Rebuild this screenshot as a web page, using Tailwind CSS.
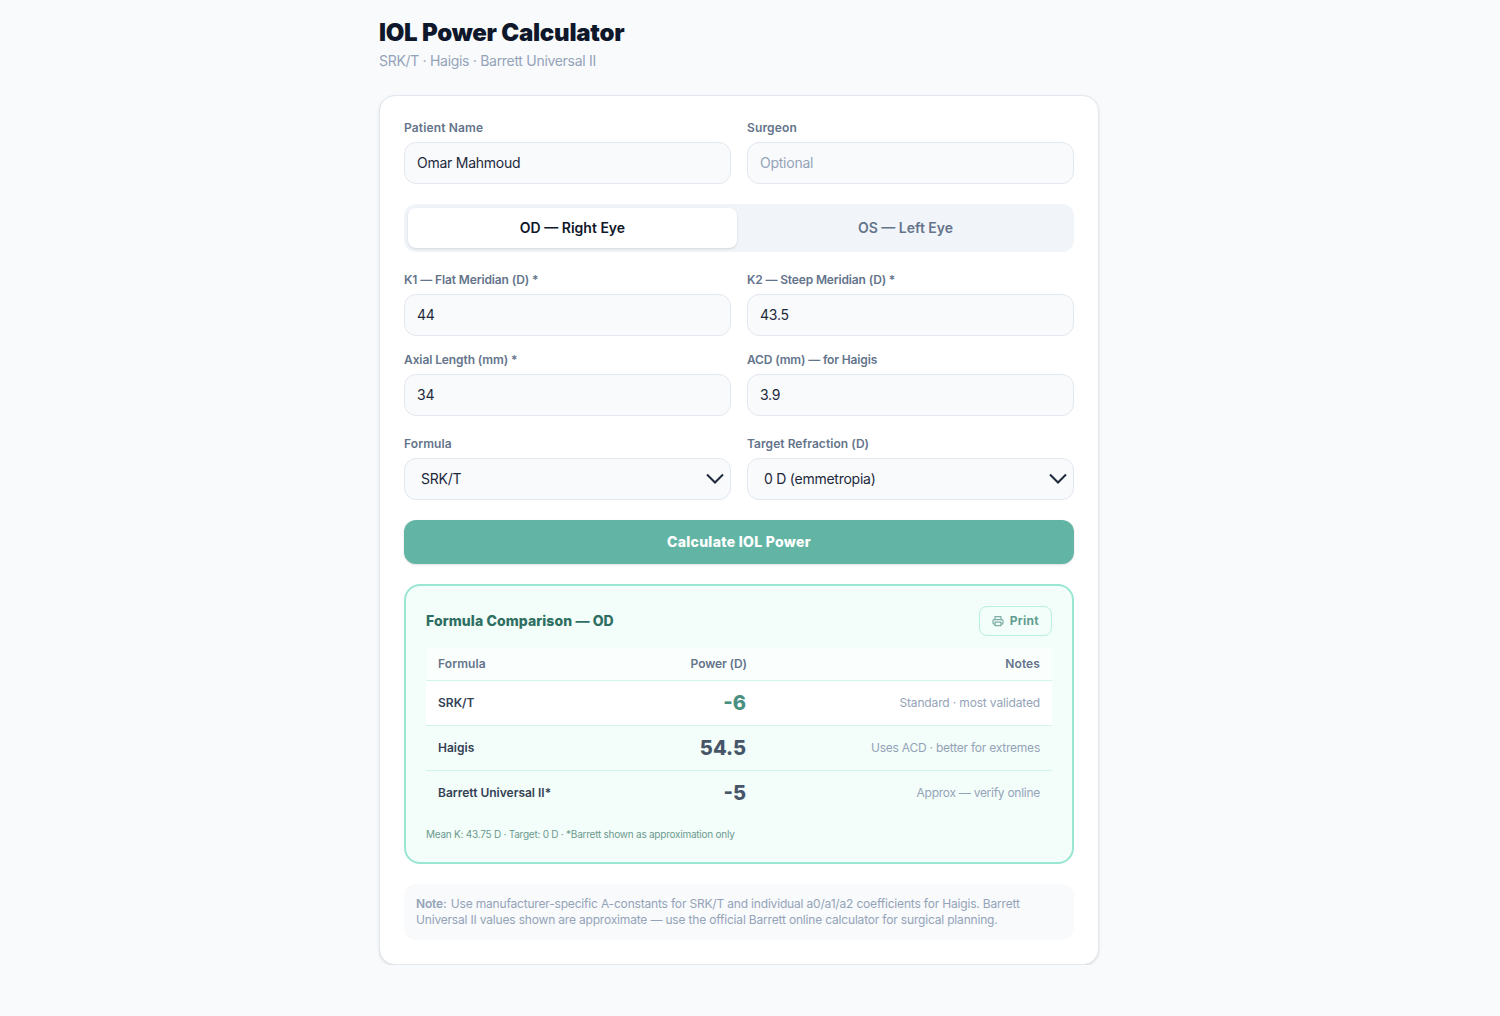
<!DOCTYPE html>
<html lang="en">
<head>
  <meta charset="UTF-8" />
  <title>IOL Power Calculator</title>
  <script src="https://cdn.jsdelivr.net/npm/@tailwindcss/browser@4"></script>
</head>
<body class="bg-[#f8fafc] font-['Inter',sans-serif] text-[#1e293b]">
  <div class="w-[720px] ml-[379px] pt-[18px]">
    <h1 class="text-[24px] leading-[30px] font-black tracking-[-0.25px] text-[#0f172a]">IOL Power Calculator</h1>
    <p class="text-[14px] leading-[20px] mt-[3px] tracking-[-0.3px] text-[#94a3b8]">SRK/T · Haigis · Barrett Universal II</p>

    <div class="mt-[24px] bg-white border border-[#e2e8f0] rounded-[16px] p-[24px] shadow-sm">
      <div class="grid grid-cols-2 gap-4">
        <div>
          <label class="block text-[12px] leading-[16px] font-semibold tracking-[0.15px] text-[#64748b] mb-[6px]">Patient Name</label>
          <input class="w-full h-[42px] px-3 pb-[2px] bg-[#f8fafc] border border-[#e2e8f0] rounded-[12px] text-[14px] tracking-[-0.25px] placeholder:text-[#94a3b8]" type="text" value="Omar Mahmoud" />
        </div>
        <div>
          <label class="block text-[12px] leading-[16px] font-semibold tracking-[0.15px] text-[#64748b] mb-[6px]">Surgeon</label>
          <input class="w-full h-[42px] px-3 pb-[2px] bg-[#f8fafc] border border-[#e2e8f0] rounded-[12px] text-[14px] tracking-[-0.25px] placeholder:text-[#94a3b8]" type="text" placeholder="Optional" />
        </div>
      </div>

      <div class="mt-5 flex gap-1 p-1 h-12 bg-[#f1f5f9] rounded-[12px]">
        <button class="flex-1 pb-[2px] bg-white rounded-[8px] shadow-sm text-[14px] font-semibold text-[#0f172a]">OD — Right Eye</button>
        <button class="flex-1 pb-[2px] text-[14px] font-semibold text-[#64748b]">OS — Left Eye</button>
      </div>

      <div class="mt-5 grid grid-cols-2 gap-x-4 gap-y-4">
        <div>
          <label class="block text-[12px] leading-[16px] font-semibold tracking-[-0.12px] text-[#64748b] mb-[6px]">K1 — Flat Meridian (D) *</label>
          <input class="w-full h-[42px] px-3 pb-[2px] bg-[#f8fafc] border border-[#e2e8f0] rounded-[12px] text-[14px] tracking-[-0.25px]" type="text" value="44" />
        </div>
        <div>
          <label class="block text-[12px] leading-[16px] font-semibold tracking-[-0.15px] text-[#64748b] mb-[6px]">K2 — Steep Meridian (D) *</label>
          <input class="w-full h-[42px] px-3 pb-[2px] bg-[#f8fafc] border border-[#e2e8f0] rounded-[12px] text-[14px] tracking-[-0.25px]" type="text" value="43.5" />
        </div>
        <div>
          <label class="block text-[12px] leading-[16px] font-semibold tracking-[-0.1px] text-[#64748b] mb-[6px]">Axial Length (mm) *</label>
          <input class="w-full h-[42px] px-3 pb-[2px] bg-[#f8fafc] border border-[#e2e8f0] rounded-[12px] text-[14px] tracking-[-0.25px]" type="text" value="34" />
        </div>
        <div>
          <label class="block text-[12px] leading-[16px] font-semibold tracking-[-0.15px] text-[#64748b] mb-[6px]">ACD (mm) — for Haigis</label>
          <input class="w-full h-[42px] px-3 pb-[2px] bg-[#f8fafc] border border-[#e2e8f0] rounded-[12px] text-[14px] tracking-[-0.25px]" type="text" value="3.9" />
        </div>
      </div>

      <div class="mt-5 grid grid-cols-2 gap-4">
        <div>
          <label class="block text-[12px] leading-[16px] font-semibold tracking-[0.1px] text-[#64748b] mb-[6px]">Formula</label>
          <div class="relative">
            <div class="h-[42px] pl-4 pb-[2px] flex items-center bg-[#f8fafc] border border-[#e2e8f0] rounded-[12px] text-[14px] tracking-[-0.25px]">SRK/T</div>
            <svg class="absolute right-[7px] top-[13px] w-[18px] h-[16px]" viewBox="0 0 18 16" fill="none" stroke="#1e293b" stroke-width="2"><path d="M1 3.5l8 8 8-8" /></svg>
          </div>
        </div>
        <div>
          <label class="block text-[12px] leading-[16px] font-semibold tracking-[0.05px] text-[#64748b] mb-[6px]">Target Refraction (D)</label>
          <div class="relative">
            <div class="h-[42px] pl-4 pb-[2px] flex items-center bg-[#f8fafc] border border-[#e2e8f0] rounded-[12px] text-[14px] tracking-[-0.25px]">0 D (emmetropia)</div>
            <svg class="absolute right-[7px] top-[13px] w-[18px] h-[16px]" viewBox="0 0 18 16" fill="none" stroke="#1e293b" stroke-width="2"><path d="M1 3.5l8 8 8-8" /></svg>
          </div>
        </div>
      </div>

      <button class="mt-5 w-full h-11 pb-[2px] bg-[#62b5a5] rounded-[12px] text-[14px] font-extrabold tracking-[0.3px] text-white shadow-sm">Calculate IOL Power</button>

      <div class="mt-5 bg-[#f3fdf9] border-2 border-[#99e6d3] rounded-[16px] p-5">
        <div class="flex items-center justify-between mb-3 h-[30px]">
          <h2 class="pb-[2px] text-[14px] font-extrabold tracking-[0.1px] text-[#2f6f63]">Formula Comparison — OD</h2>
          <button class="h-[30px] px-3 flex items-center gap-[6px] bg-[#f3fdf9] border border-[#b9f0e2] rounded-[8px] text-[12px] font-bold tracking-[0.3px] text-[#5f9d90]">
            <svg class="w-3 h-3" viewBox="0 0 24 24" fill="none" stroke="#7fb0a6" stroke-width="2.5" stroke-linecap="round" stroke-linejoin="round"><path d="M6 9V3h12v6" /><path d="M6 18H4a2 2 0 0 1-2-2v-5a2 2 0 0 1 2-2h16a2 2 0 0 1 2 2v5a2 2 0 0 1-2 2h-2" /><path d="M6 14h12v7H6z" /></svg>
            Print
          </button>
        </div>

        <table class="w-full border-collapse">
          <thead>
            <tr class="h-[32px] bg-[#fafefd] border-b border-[#d1f5ea] text-[12px] font-semibold text-[#64748b]">
              <th class="pl-3 text-left font-semibold tracking-[0.1px] w-[200px]">Formula</th>
              <th class="pr-[11px] text-right font-semibold tracking-[-0.1px] w-[132px]">Power (D)</th>
              <th class="pr-3 text-right font-semibold tracking-[0.1px]">Notes</th>
            </tr>
          </thead>
          <tbody>
            <tr class="h-[45px] bg-white border-b border-[#d1f5ea]">
              <td class="pl-3 text-[12px] font-semibold text-[#334155]">SRK/T</td>
              <td class="pr-3 pt-[1px] text-right text-[20px] font-extrabold text-[#4a9082]">-6</td>
              <td class="pr-3 text-right text-[12px] tracking-[-0.15px] text-[#94a3b8]">Standard · most validated</td>
            </tr>
            <tr class="h-[45px] border-b border-[#d1f5ea]">
              <td class="pl-3 text-[12px] font-semibold text-[#334155]">Haigis</td>
              <td class="pr-3 pt-[1px] text-right text-[20px] font-extrabold text-[#475569]">54.5</td>
              <td class="pr-3 text-right text-[12px] tracking-[-0.23px] text-[#94a3b8]">Uses ACD · better for extremes</td>
            </tr>
            <tr class="h-[45px]">
              <td class="pl-3 text-[12px] font-semibold text-[#334155]">Barrett Universal II*</td>
              <td class="pr-3 pt-[1px] text-right text-[20px] font-extrabold text-[#475569]">-5</td>
              <td class="pr-3 text-right text-[12px] tracking-[-0.27px] text-[#94a3b8]">Approx — verify online</td>
            </tr>
          </tbody>
        </table>

        <p class="mt-[12px] mb-[1px] text-[10px] leading-[14px] tracking-[-0.24px] text-[#6b9a8f]">Mean K: 43.75 D · Target: 0 D · *Barrett shown as approximation only</p>
      </div>

      <div class="mt-5 px-3 pt-[12px] h-14 bg-[#f8fafc] rounded-[12px] text-[12px] leading-[16px] tracking-[-0.18px] text-[#94a3b8]">
        <strong class="font-semibold pr-[1px]">Note:</strong> Use manufacturer-specific A-constants for SRK/T and individual a0/a1/a2 coefficients for Haigis. Barrett Universal II values shown are approximate — use the official Barrett online calculator for surgical planning.
      </div>
    </div>
  </div>
</body>
</html>
